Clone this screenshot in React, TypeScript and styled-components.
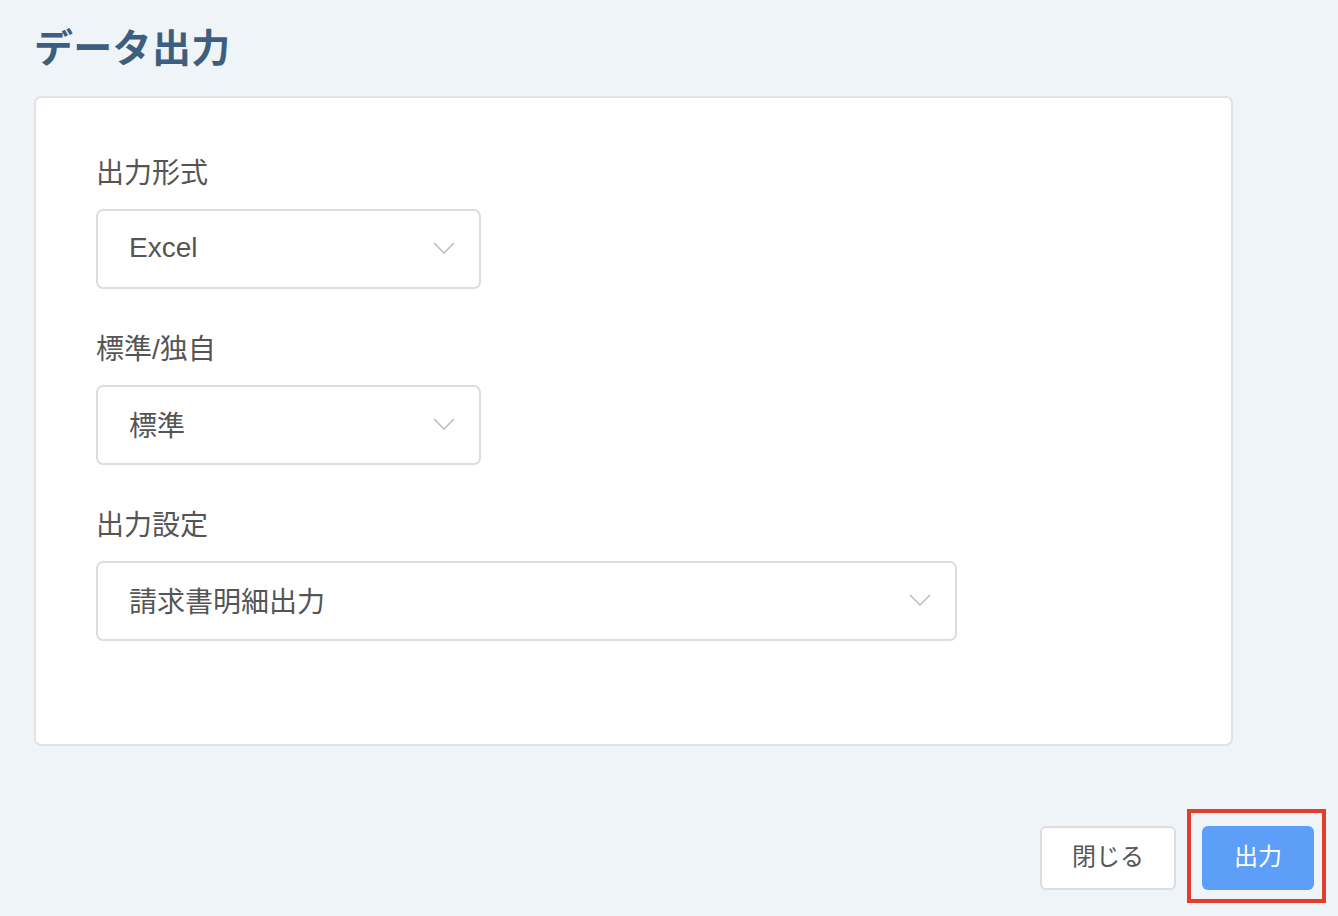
import styled, { createGlobalStyle } from 'styled-components';

const GlobalStyle = createGlobalStyle`
  html, body {
    margin: 0;
    padding: 0;
    background: #eff4f9;
    font-family: "Liberation Sans", "Noto Sans CJK JP", sans-serif;
  }
`;

const Page = styled.div`
  width: 1338px;
  height: 916px;
  box-sizing: border-box;
  padding: 21px 24px 0 34px;
  display: flex;
  flex-direction: column;
`;

const Title = styled.h1`
  margin: 0 0 19px 0;
  font-size: 39px;
  line-height: 56px;
  font-weight: 700;
  color: #3e5e7f;
  letter-spacing: 0.3px;
`;

const Card = styled.div`
  width: 1199px;
  box-sizing: border-box;
  background: #fff;
  border: 2px solid #e0e2e5;
  border-radius: 7px;
  padding: 55px 60px 103px;
  display: flex;
  flex-direction: column;
  gap: 40px;
`;

const Field = styled.div`
  display: flex;
  flex-direction: column;
  gap: 14px;
`;

const Label = styled.div`
  font-size: 28px;
  line-height: 42px;
  color: #555;
`;

const Select = styled.div<{ $width: number }>`
  width: ${(p) => p.$width}px;
  height: 80px;
  box-sizing: border-box;
  border: 2px solid #dcdde2;
  border-radius: 7px;
  padding: 0 24px 2px 31px;
  display: flex;
  align-items: center;
  justify-content: space-between;
  font-size: 28px;
  color: #555;
`;

const Footer = styled.div`
  margin-top: 80px;
  display: flex;
  justify-content: flex-end;
  gap: 26px;
`;

const Button = styled.button<{ $primary?: boolean }>`
  position: relative;
  height: 64px;
  box-sizing: border-box;
  border-radius: 6px;
  font-family: "Liberation Sans", "Noto Sans CJK JP", sans-serif;
  font-size: 24px;
  padding: 0 0 8px;
  cursor: pointer;
  width: ${(p) => (p.$primary ? '112px' : '136px')};
  border: ${(p) => (p.$primary ? 'none' : '2px solid #dcdde2')};
  background: ${(p) => (p.$primary ? '#5c9ef8' : '#fff')};
  color: ${(p) => (p.$primary ? '#fff' : '#555')};
`;

const Highlight = styled.span`
  position: absolute;
  left: -15px;
  right: -12px;
  top: -17px;
  bottom: -13px;
  border: 4px solid #e33d2a;
  pointer-events: none;
`;

const Chevron = () => (
  <svg width="22" height="12" viewBox="0 0 22 12" fill="none">
    <path d="M1 1 L11 11 L21 1" stroke="#b9bcc3" strokeWidth="1.5" />
  </svg>
);

const fields = [
  { label: '出力形式', value: 'Excel', width: 385 },
  { label: '標準/独自', value: '標準', width: 385 },
  { label: '出力設定', value: '請求書明細出力', width: 861 },
];

export default function App() {
  return (
    <>
      <GlobalStyle />
      <Page>
        <Title>データ出力</Title>
        <Card>
          {fields.map((f) => (
            <Field key={f.label}>
              <Label>{f.label}</Label>
              <Select $width={f.width}>
                <span>{f.value}</span>
                <Chevron />
              </Select>
            </Field>
          ))}
        </Card>
        <Footer>
          <Button>閉じる</Button>
          <Button $primary>
            出力
            <Highlight />
          </Button>
        </Footer>
      </Page>
    </>
  );
}
